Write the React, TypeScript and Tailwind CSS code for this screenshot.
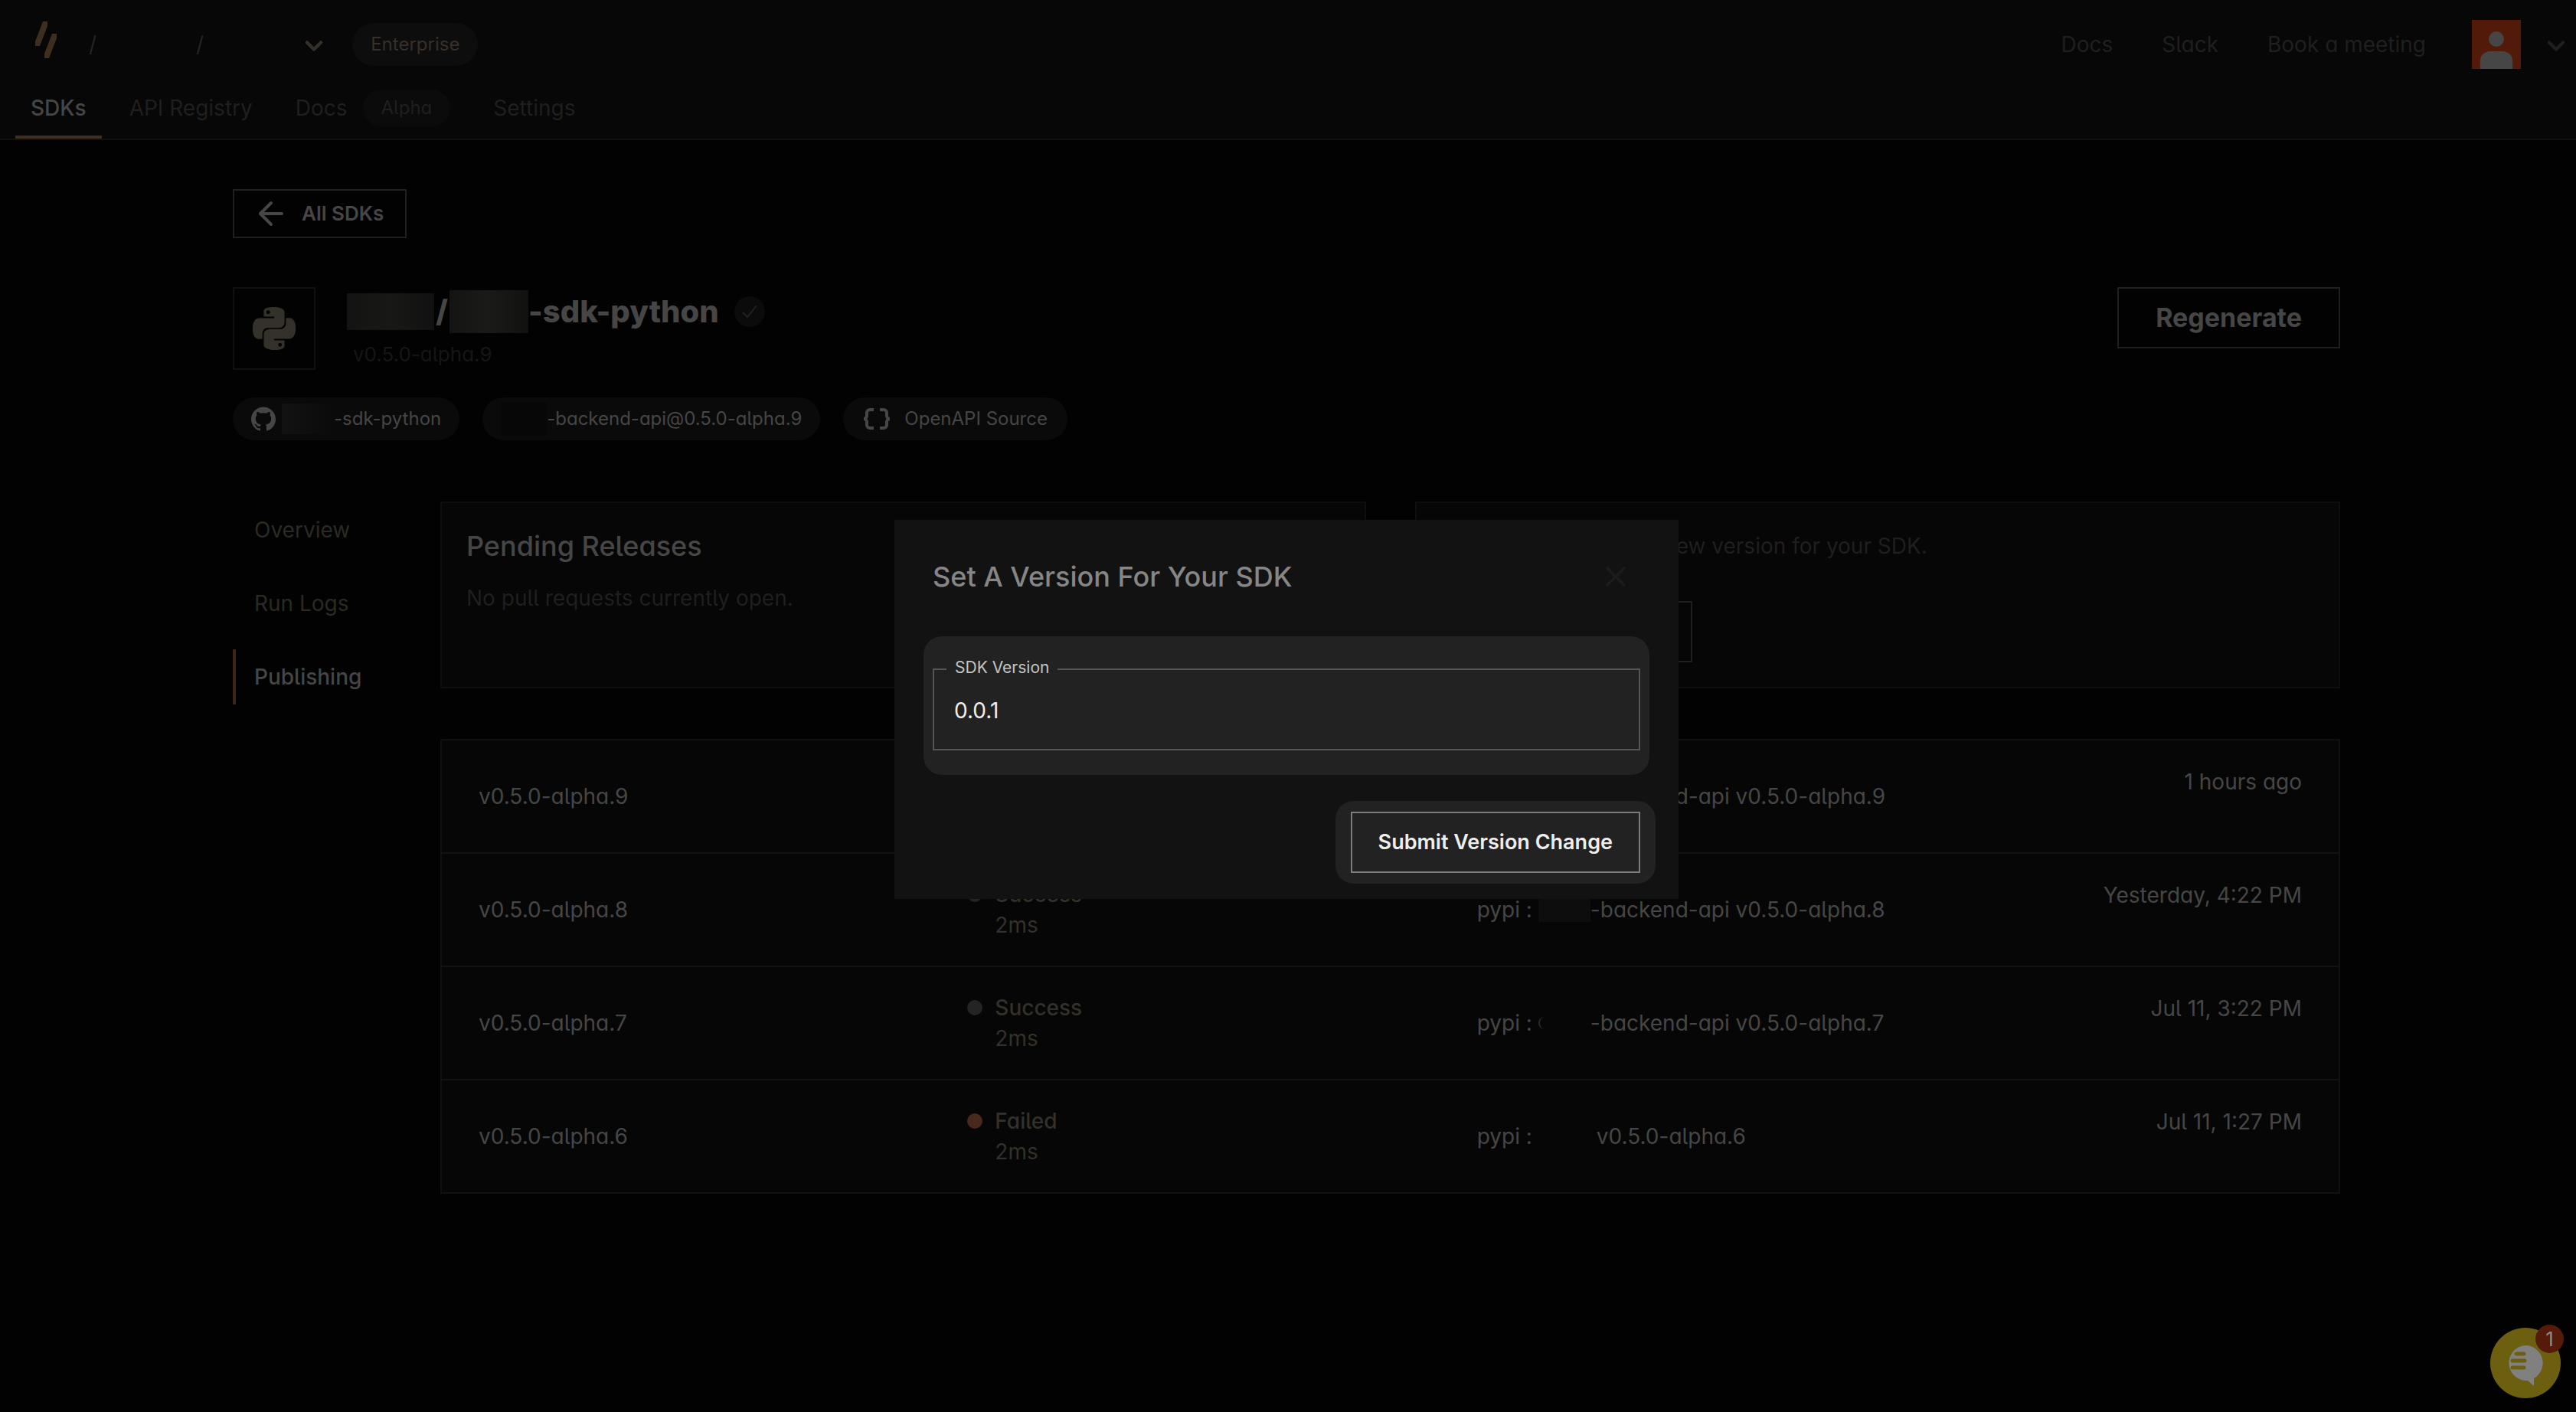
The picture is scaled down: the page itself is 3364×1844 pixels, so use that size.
import { useState } from 'react'
import { SiGithub, SiPython } from 'react-icons/si'
import { ArrowLeft, ChevronDown, X } from 'lucide-react'

interface Release {
  version: string
  status: 'Success' | 'Failed'
  mask: string
  target: string
  time: string
}

const releases: Release[] = [
  { version: 'v0.5.0-alpha.9', status: 'Success', mask: 'h-8 w-[68px]', target: '-backend-api v0.5.0-alpha.9', time: '1 hours ago' },
  { version: 'v0.5.0-alpha.8', status: 'Success', mask: 'h-8 w-[68px] bg-[#0d0d0d]', target: '-backend-api v0.5.0-alpha.8', time: 'Yesterday, 4:22 PM' },
  { version: 'v0.5.0-alpha.7', status: 'Success', mask: 'h-4 w-[68px] rounded-l-full border-l-2 border-[#2b2b2b]', target: '-backend-api v0.5.0-alpha.7', time: 'Jul 11, 3:22 PM' },
  { version: 'v0.5.0-alpha.6', status: 'Failed', mask: 'h-8 w-[76px]', target: 'v0.5.0-alpha.6', time: 'Jul 11, 1:27 PM' },
]

const sections = ['Overview', 'Run Logs', 'Publishing']

export default function App() {
  return (
    <div className="min-h-screen bg-[#020202] font-[Inter,sans-serif] text-[28px] leading-[40px] text-[#464646] [font-feature-settings:'cv11','cv05']">
      <Header />
      <main className="pr-1">
        <div className="mx-auto max-w-[2752px] pt-16">
          <a
            href="#sdks"
            className="flex h-16 w-fit items-center gap-4 border-2 border-[#1f1f1f] pl-6 pr-7 text-[26px] font-semibold [font-feature-settings:normal]"
          >
            <ArrowLeft className="h-12 w-12" />
            All SDKs
          </a>
          <TitleBar />
          <SourcePills />
          <div className="mt-20 flex">
            <SideNav />
            <div className="min-w-0 flex-1">
              <div className="grid grid-cols-2 gap-16">
                <section className="h-[244px] border-2 border-[#0e0e0e] bg-[#060606] px-8 pt-8">
                  <h2 className="text-[36px] font-medium leading-[48px]">Pending Releases</h2>
                  <p className="mt-6 text-[#1f1f1f]">No pull requests currently open.</p>
                </section>
                <section className="h-[244px] border-2 border-[#0e0e0e] bg-[#060606] px-8 pt-9">
                  <p className="text-[#1f1f1f]">Manually configure a new version for your SDK.</p>
                  <button type="button" className="mt-[52px] h-20 w-[328px] border-2 border-[#1f1f1f] text-[26px] font-semibold">
                    Set Version
                  </button>
                </section>
              </div>
              <ReleaseTable />
            </div>
          </div>
        </div>
      </main>
      <VersionDialog />
      <ChatButton />
    </div>
  )
}

function Header() {
  return (
    <header className="border-b-2 border-[#101010] bg-[#070707]">
      <div className="flex h-[116px] items-center justify-between pl-[46px] pr-2">
        <div className="flex items-center">
          <svg viewBox="0 0 28 60" className="h-15 w-7" fill="#3e2e1f">
            <path d="M10 0h6v6L6 32H0v-6z" />
            <path d="M22 16h6v6L18 48h-6v-6z" />
          </svg>
          <span className="ml-[42px] text-[#242424]">/</span>
          <span className="ml-[130px] text-[#242424]">/</span>
          <button type="button" aria-label="Switch workspace" className="ml-[126px] mt-1">
            <ChevronDown className="h-9 w-9 text-[#33312a]" strokeWidth={3} />
          </button>
          <span className="ml-8 flex h-14 items-center rounded-full bg-[#0d0d0d] px-6 text-[24px] text-[#3a2e28]">Enterprise</span>
        </div>
        <div className="flex items-center gap-16 text-[#1f1f1f]">
          <a href="#docs">Docs</a>
          <a href="#slack">Slack</a>
          <a href="#meeting">Book a meeting</a>
          <div className="-ml-1 flex items-center gap-7">
            <svg viewBox="0 0 64 64" className="h-16 w-16">
              <rect width="64" height="64" fill="#521a08" />
              <circle cx="32" cy="25" r="10" fill="#464646" />
              <path d="M11 64V53c0-7 6-12 13-12h16c7 0 13 5 13 12v11z" fill="#464646" />
            </svg>
            <button type="button" aria-label="Account menu" className="mt-1">
              <ChevronDown className="h-9 w-9 text-[#1f1f1f]" strokeWidth={3} />
            </button>
          </div>
        </div>
      </div>
      <nav className="flex h-[65px] items-stretch gap-4 pl-5 text-[#1f1f1f]">
        <a href="#sdks" className="border-b-4 border-[#3e2e1f] px-5 pt-[5px] font-medium text-[#464646]">SDKs</a>
        <a href="#registry" className="px-5 pt-[5px]">API Registry</a>
        <a href="#docs" className="flex items-start gap-5 px-5 pt-[5px]">
          Docs
          <span className="-mt-1 flex h-12 items-center rounded-full bg-[#0b0b0b] px-6 text-[24px]">Alpha</span>
        </a>
        <a href="#settings" className="px-5 pt-[5px]">Settings</a>
      </nav>
    </header>
  )
}

function TitleBar() {
  return (
    <div className="mt-16 flex items-start justify-between">
      <div className="flex">
        <div className="flex h-[108px] w-[108px] items-center justify-center border-2 border-[#101010]">
          <SiPython className="h-14 w-14 text-[#33312a]" />
        </div>
        <div className="ml-[41px]">
          <h1 className="flex h-16 items-center text-[40px] font-extrabold leading-[56px]">
            <span className="h-12 w-[114px] bg-linear-to-r from-[#131313] via-[#181816] to-[#111111]" />
            <span className="mx-[2px]">/</span>
            <span className="h-14 w-[103px] bg-linear-to-r from-[#141414] via-[#1a1a17] to-[#111111]" />
            <span>-sdk-python</span>
            <span className="ml-5 flex h-10 w-10 items-center justify-center rounded-full bg-[#0b0b0b] text-[#222222]">
              <svg viewBox="0 0 20 18" className="h-[18px] w-5" fill="none" stroke="currentColor" strokeWidth="2">
                <path d="M1 10l6 6L19 1" />
              </svg>
            </span>
          </h1>
          <p className="ml-2 mt-1 text-[26px] text-[#161616]">v0.5.0-alpha.9</p>
        </div>
      </div>
      <button type="button" className="h-20 border-2 border-[#1f1f1f] px-12 text-[34px] font-bold [font-feature-settings:normal]">
        Regenerate
      </button>
    </div>
  )
}

function SourcePills() {
  return (
    <div className="mt-9 flex gap-[30px] text-[24px]">
      <a href="#repo" className="flex h-14 items-center rounded-full bg-[#0a0a0a] px-6">
        <SiGithub className="h-8 w-8" />
        <span className="ml-2 h-10 w-[68px] bg-linear-to-r from-[#121212] to-[#0a0a0a]" />
        <span>-sdk-python</span>
      </a>
      <a href="#registry" className="flex h-14 items-center rounded-full bg-[#0a0a0a] px-6">
        <span className="h-11 w-[60px] bg-[#070707]" />
        <span>-backend-api@0.5.0-alpha.9</span>
      </a>
      <a href="#openapi" className="flex h-14 items-center gap-[18px] rounded-full bg-[#0a0a0a] px-[26px]">
        <svg viewBox="0 0 36 28" className="h-7 w-9" fill="none" stroke="currentColor" strokeWidth="4">
          <path d="M14 2H9a4 4 0 0 0-4 4v4a4 4 0 0 1-4 4 4 4 0 0 1 4 4v4a4 4 0 0 0 4 4h5" />
          <path d="M22 2h5a4 4 0 0 1 4 4v4a4 4 0 0 0 4 4 4 4 0 0 0-4 4v4a4 4 0 0 1-4 4h-5" />
        </svg>
        OpenAPI Source
      </a>
    </div>
  )
}

function SideNav() {
  return (
    <nav className="flex w-[271px] shrink-0 flex-col gap-6 pt-px text-[#2b2a24]">
      {sections.map((name) => (
        <a
          key={name}
          href={`#${name}`}
          className={`flex h-[72px] items-center border-l-4 pl-6 ${
            name === 'Publishing' ? 'border-[#3e2519] font-medium text-[#464646]' : 'border-transparent'
          }`}
        >
          {name}
        </a>
      ))}
    </nav>
  )
}

function ReleaseTable() {
  return (
    <table className="mt-[66px] w-full table-fixed border-2 border-[#101010] bg-[#060606] text-left">
      <tbody>
        {releases.map((r) => (
          <tr key={r.version} className="h-[148px] border-b-2 border-[#121212]">
            <td className="w-[27%] pl-12">{r.version}</td>
            <td className="w-[27%] pl-[18px] text-[#33312a]">
              <div className="flex items-center gap-4 font-medium">
                <span className={`h-5 w-5 rounded-full ${r.status === 'Failed' ? 'bg-[#48291b]' : 'bg-[#242424]'}`} />
                {r.status}
              </div>
              <div className="pl-9">2ms</div>
            </td>
            <td className="pl-[14px]">
              <div className="flex items-center">
                pypi :
                <span className={`ml-2 ${r.mask}`} />
                {r.target}
              </div>
            </td>
            <td className="w-[20%] pr-12 pt-[34px] text-right align-top">{r.time}</td>
          </tr>
        ))}
      </tbody>
    </table>
  )
}

function VersionDialog() {
  const [version, setVersion] = useState('0.0.1')

  return (
    <div className="fixed inset-0 flex items-center justify-center pr-1 pt-2">
      <form
        role="dialog"
        aria-labelledby="dialog-title"
        onSubmit={(e) => e.preventDefault()}
        className="w-[1024px] bg-[#121212] pb-5 pt-12"
      >
        <div className="flex items-center justify-between pl-[50px] pr-[60px]">
          <h2 id="dialog-title" className="text-[36px] font-medium leading-[52px] text-[#868686]">Set A Version For Your SDK</h2>
          <button type="button" aria-label="Close">
            <X className="h-11 w-11 text-[#1c1c1c]" strokeWidth={2} />
          </button>
        </div>
        <div className="mx-[38px] mt-[52px] rounded-3xl bg-[#222222] px-3 pb-8 pt-7">
          <fieldset className="h-[121px] border-2 border-[#565656] px-4">
            <legend className="px-[11px] pb-1 text-[21px] leading-[26px] text-[#c4c4c4]">
              <label htmlFor="sdk-version">SDK Version</label>
            </legend>
            <input
              id="sdk-version"
              value={version}
              onChange={(e) => setVersion(e.target.value)}
              className="block h-[78px] w-full bg-transparent px-[10px] text-[28px] text-[#eeeeee] outline-none [font-feature-settings:normal]"
            />
          </fieldset>
        </div>
        <div className="mt-[34px] flex justify-end pr-[30px]">
          <div className="rounded-3xl bg-[#222222] px-5 py-[14px]">
            <button type="submit" className="block h-20 border-2 border-[#7c7c7c] px-[34px] text-[27px] font-semibold text-[#eeeeee] [font-feature-settings:normal]">
              Submit Version Change
            </button>
          </div>
        </div>
      </form>
    </div>
  )
}

function ChatButton() {
  return (
    <button type="button" aria-label="Open chat" className="fixed bottom-[18px] right-5 h-[92px] w-[92px] rounded-full bg-[#6c6010]">
      <svg viewBox="0 0 92 92" className="h-full w-full">
        <path d="M46 23a23 23 0 1 0 3 46l8 7v-10A23 23 0 0 0 46 23z" fill="#808080" />
        <path d="M34 34h10M29 43h16M29 52h15" stroke="#6c6010" strokeWidth="5" strokeLinecap="round" />
      </svg>
      <span className="absolute -right-1 -top-1 flex h-[37px] w-[37px] items-center justify-center rounded-full bg-[#551a0a] text-[26px] leading-[37px] text-[#8a8a8a]">
        1
      </span>
    </button>
  )
}
